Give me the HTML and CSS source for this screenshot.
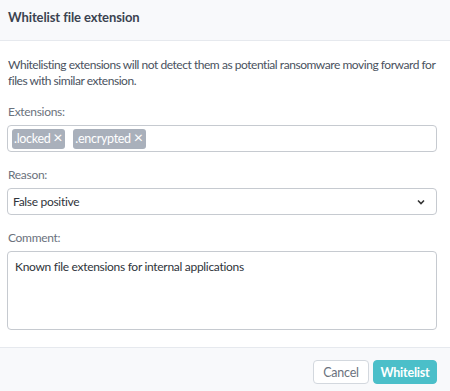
FILE: index.html
```html
<!DOCTYPE html>
<html lang="en">
  <head>
    <meta charset="UTF-8" />
    <title>Whitelist file extension</title>
    <link rel="stylesheet" href="styles.css">
  </head>
  <body>
    <div class="modal">
      <div class="modal-header">
        <h2>Whitelist file extension</h2>
      </div>

      <div class="modal-body">
        <p class="description">
          Whitelisting extensions will not detect them as potential ransomware moving forward for<br>
          files with similar extension.
        </p>

        <label class="field-label">Extensions:</label>
        <div class="tag-input">
          <span class="tag">.locked <span class="tag-remove">&times;</span></span>
          <span class="tag">.encrypted <span class="tag-remove">&times;</span></span>
        </div>

        <label class="field-label">Reason:</label>
        <div class="select-box">
          <span>False positive</span>
          <svg class="chevron" width="8" height="6" viewBox="0 0 8 6">
            <path d="M1 1.5 L4 4.5 L7 1.5" fill="none" stroke="#333" stroke-width="1.6" />
          </svg>
        </div>

        <label class="field-label">Comment:</label>
        <div class="textarea">Known file extensions for internal applications</div>
      </div>

      <div class="modal-footer">
        <button class="btn btn-cancel">Cancel</button>
        <button class="btn btn-primary">Whitelist</button>
      </div>
    </div>
  </body>
</html>
```

FILE: styles.css
```css
body {
  margin: 0;
  font-family: Lato, "Open Sans", sans-serif;
  font-size: 12px;
  letter-spacing: -0.3px;
  color: #4a5260;
  background: #ffffff;
}
.modal {
  width: 450px;
  height: 391px;
  display: flex;
  flex-direction: column;
}
.modal-header {
  height: 41px;
  box-sizing: border-box;
  background: #f8f9fb;
  border-bottom: 1px solid #e6e9ee;
  padding: 9px 8px 0;
}
.modal-header h2 {
  margin: 0;
  font-size: 13px;
  line-height: 16px;
  font-weight: bold;
  letter-spacing: -0.1px;
  color: #3b4350;
}
.modal-body {
  padding: 16px 13px 0 7px;
  display: flex;
  flex-direction: column;
}
.description {
  margin: 0 0 0 1px;
  line-height: 16px;
  letter-spacing: -0.46px;
  white-space: nowrap;
}
.field-label {
  display: block;
  margin: 15px 0 5px 1px;
  color: #6b727d;
  line-height: 16px;
}
.tag-input {
  height: 27px;
  box-sizing: border-box;
  border: 1px solid #c6cad0;
  border-radius: 4px;
  padding: 3px 4px;
  display: flex;
  gap: 8px;
  align-items: center;
}
.tag {
  background: #a9b0bb;
  color: #ffffff;
  border-radius: 3px;
  padding: 0 3px 0 2px;
  line-height: 20px;
  font-size: 12.5px;
}
.tag-remove {
  font-size: 16px;
  line-height: 14px;
}
.select-box {
  height: 27px;
  box-sizing: border-box;
  border: 1px solid #c6cad0;
  border-radius: 4px;
  padding: 0 11px 0 5px;
  display: flex;
  align-items: center;
  justify-content: space-between;
  color: #2f343b;
}
.textarea {
  height: 79px;
  box-sizing: border-box;
  border: 1px solid #c6cad0;
  border-radius: 4px;
  padding: 7px 7px;
  color: #2f343b;
}
.modal-footer {
  margin-top: 17px;
  border-top: 1px solid #e6e9ee;
  background: #f8f9fb;
  flex: 1;
  display: flex;
  justify-content: flex-end;
  align-items: flex-start;
  gap: 4px;
  padding: 12px 13px 0 0;
}
.btn {
  box-sizing: border-box;
  font-family: inherit;
  font-size: 12.5px;
  letter-spacing: -0.2px;
  height: 24px;
  border-radius: 4px;
  padding: 0;
  cursor: pointer;
}
.btn-cancel {
  background: #ffffff;
  border: 1px solid #d3d8de;
  color: #6b727d;
  width: 56px;
}
.btn-primary {
  background: #4bbfc9;
  border: 1px solid #4bbfc9;
  color: #ffffff;
  font-weight: bold;
  width: 64px;
}
```
